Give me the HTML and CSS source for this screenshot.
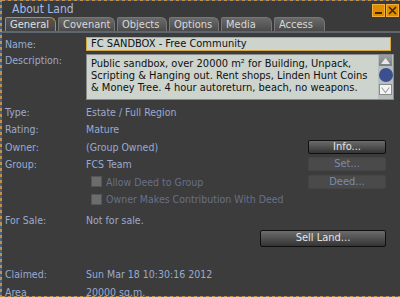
FILE: index.html
```html
<!DOCTYPE html>
<html lang="en">
<head>
    <meta charset="UTF-8">
    <title>About Land</title>
    <link rel="stylesheet" href="styles.css">
</head>
<body>

<div class="floater">
    <div class="titlebar">
        <span class="title">About Land</span>
        <div class="title-btns">
            <span class="tbtn"><svg width="11" height="11" viewBox="0 0 11 11"><rect x="2" y="7" width="7" height="2" fill="#3c2a08"/></svg></span>
            <span class="tbtn"><svg width="11" height="11" viewBox="0 0 11 11"><path d="M2 2 L9 9 M9 2 L2 9" stroke="#3c2a08" stroke-width="1.6"/></svg></span>
        </div>
    </div>

    <div class="tabs">
        <span class="tab active" style="width:51px">General</span>
        <span class="tab" style="width:57px">Covenant</span>
        <span class="tab" style="width:50px">Objects</span>
        <span class="tab" style="width:50px">Options</span>
        <span class="tab" style="width:51px">Media</span>
        <span class="tab" style="width:51px">Access</span>
    </div>

    <div class="panel">
        <div class="row name-row">
            <span class="label">Name:</span>
            <div class="input focus">FC SANDBOX - Free Community</div>
        </div>

        <div class="row desc-row">
            <span class="label">Description:</span>
            <div class="textarea">
                <div class="text">Public sandbox, over 20000 m² for Building, Unpack, Scripting &amp; Hanging out. Rent shops, Linden Hunt Coins &amp; Money Tree. 4 hour autoreturn, beach, no weapons.</div>
                <div class="scrollbar">
                    <span class="arrow up"><svg width="13" height="10" viewBox="0 0 13 10"><path d="M2 8 L6.5 2 L11 8 Z" fill="#e8e8e8"/></svg></span>
                    <span class="thumb"></span>
                    <span class="arrow down"><svg width="13" height="10" viewBox="0 0 13 10"><path d="M2 2 L6.5 8 L11 2" fill="none" stroke="#9aa0a0" stroke-width="1.2"/></svg></span>
                </div>
            </div>
        </div>

        <div class="row info"><span class="label">Type:</span><span class="value">Estate / Full Region</span></div>
        <div class="row info"><span class="label">Rating:</span><span class="value">Mature</span></div>
        <div class="row info">
            <span class="label">Owner:</span><span class="value">(Group Owned)</span>
            <button class="btn">Info...</button>
        </div>
        <div class="row info">
            <span class="label">Group:</span><span class="value">FCS Team</span>
            <button class="btn disabled">Set...</button>
        </div>
        <div class="row info">
            <label class="check"><span class="box"></span>Allow Deed to Group</label>
            <button class="btn disabled">Deed...</button>
        </div>
        <div class="row info">
            <label class="check"><span class="box"></span>Owner Makes Contribution With Deed</label>
        </div>

        <div class="row info sale"><span class="label">For Sale:</span><span class="value">Not for sale.</span></div>
        <div class="row sell-row"><button class="btn sell">Sell Land...</button></div>

        <div class="row info claimed"><span class="label">Claimed:</span><span class="value">Sun Mar 18 10:30:16 2012</span></div>
        <div class="row info"><span class="label">Area</span><span class="value">20000 sq.m.</span></div>
    </div>
</div>

</body>
</html>
```

FILE: styles.css
```css
body {
    margin: 0;
    padding: 0;
    background-color: #3c3c3c;
    font-family: "DejaVu Sans Condensed", "DejaVu Sans", sans-serif;
    font-stretch: condensed;
    font-size: 10.5px;
    color: #9aaad0;
}
.floater {
    position: relative;
    width: 400px;
    height: 297px;
    box-sizing: border-box;
    overflow: hidden;
    background-color: #3c3c3c;
    border-left: 2px solid #8a6a40;
    border-image: repeating-linear-gradient(#c09050 0 3px, #48607c 3px 6px) 1;
}
/* dashed frame edges */
.floater::before,
.floater::after {
    content: "";
    position: absolute;
    left: 0;
    width: 100%;
    height: 1px;
    background: repeating-linear-gradient(90deg, #c09050 0 3px, #48607c 3px 6px);
}
.floater::before { top: 0; }
.floater::after { bottom: 0; }
.titlebar {
    height: 16px;
    display: flex;
    align-items: center;
    justify-content: space-between;
    padding-left: 10px;
    background-color: #3a3a3a;
}
.title {
    color: #a9b9e2;
    font-size: 12px;
    padding-top: 1px;
}
.title-btns {
    display: flex;
    gap: 1px;
    padding-top: 4px;
    margin-right: 1px;
}
.tbtn {
    width: 13px;
    height: 13px;
    background-color: #e08c00;
    border: 1px solid #f0b040;
    box-sizing: border-box;
    display: flex;
    align-items: center;
    justify-content: center;
}
.tabs {
    display: flex;
    gap: 2px;
    padding: 1px 0 0 3px;
    height: 14px;
    border-bottom: 2px solid #5e6670;
    background-color: #3a3a3a;
}
.tab {
    height: 14px;
    box-sizing: border-box;
    padding-left: 4px;
    line-height: 13px;
    font-size: 11px;
    color: #d8d8d8;
    background: linear-gradient(#6a6a6a, #4a4a4a);
    border: 1px solid #777;
    border-bottom: none;
    border-radius: 2px 6px 0 0;
}
.tab.active {
    background: linear-gradient(#565656, #444);
    border-color: #c48a30;
    color: #e0e0e0;
}
.panel {
    padding: 3px 9px 0 3px;
    height: 270px;
}
.row {
    display: flex;
    align-items: center;
}
.label {
    width: 81px;
    flex-shrink: 0;
}
.name-row {
    height: 15px;
}
.input {
    flex: 1;
    height: 14px;
    box-sizing: border-box;
    padding-left: 4px;
    line-height: 12px;
    font-size: 11px;
    background-color: #cdd3cd;
    color: #101010;
    border: 1px solid #888;
}
.input.focus {
    border-color: #d8a840;
}
.desc-row {
    align-items: flex-start;
    margin-top: 3px;
    height: 49px;
}
.textarea {
    flex: 1;
    display: flex;
    height: 46px;
    margin-right: -3px;
    background-color: #cdd3cd;
    border: 1px solid #8a8a8a;
    box-sizing: border-box;
}
.text {
    flex: 1;
    padding: 3px 4px;
    color: #101010;
    font-size: 11px;
    line-height: 12px;
}
.scrollbar {
    width: 15px;
    display: flex;
    flex-direction: column;
    align-items: center;
    background-color: #b8bebe;
}
.arrow {
    width: 13px;
    height: 11px;
    display: flex;
    align-items: center;
    justify-content: center;
}
.arrow.up {
    background: linear-gradient(#9aa0a0, #7a8080);
}
.arrow.down {
    background-color: #f4f4f4;
    border: 1px solid #8a8a8a;
    box-sizing: border-box;
}
.thumb {
    width: 14px;
    height: 14px;
    margin: 2px 0;
    border-radius: 50%;
    background-color: #3c5090;
}
.info {
    height: 17.5px;
}
.value {
    flex: 1;
}
.btn {
    width: 78px;
    height: 14px;
    margin-right: 5px;
    padding: 0;
    font-family: inherit;
    font-stretch: condensed;
    font-size: 11px;
    line-height: 12px;
    color: #e4e4e4;
    background: linear-gradient(#6c6c6c, #343434);
    border: 1px solid #101010;
    border-radius: 2px;
}
.btn.disabled {
    color: #7a8aae;
    background: #4a4a4a;
    border-color: #454545;
}
.check {
    flex: 1;
    display: flex;
    align-items: center;
    padding-left: 86px;
    color: #687088;
}
.box {
    width: 9px;
    height: 9px;
    margin-right: 4px;
    background-color: #6c6c6c;
    border: 1px solid #555;
}
.sale {
    margin-top: 3px;
}
.sell-row {
    justify-content: flex-end;
    height: 17px;
    margin-top: 1px;
}
.btn.sell {
    width: 126px;
    height: 17px;
}
.claimed {
    margin-top: 19px;
}
```
